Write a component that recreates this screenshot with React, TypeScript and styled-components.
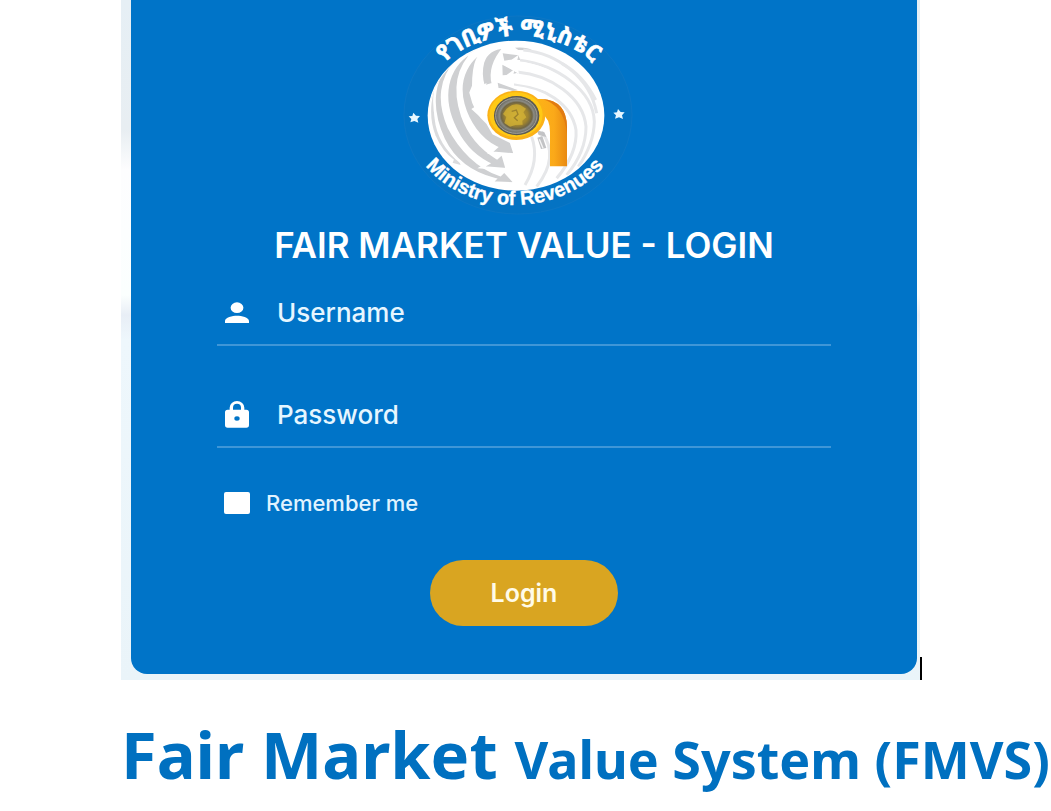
import React from 'react';
import styled, { createGlobalStyle } from 'styled-components';

const GlobalStyle = createGlobalStyle`
  *, *::before, *::after { box-sizing: border-box; }
  body { margin: 0; background: #fff; font-family: Inter, 'Liberation Sans', sans-serif; }
`;

const Page = styled.main`
  display: flex;
  flex-direction: column;
`;

const Stage = styled.div`
  display: flex;
  align-items: flex-end;
  margin: 0 129px 0 121px;
`;

const Backdrop = styled.div`
  flex: 1;
  padding: 0 3px 6px 10px;
  background: linear-gradient(#e6eff5 0, #e8eef2 130px, #fdfdfe 170px, #fbfffe 295px, #e8eef6 315px, #eef7fc 340px, #eaf4f9 100%);
`;

const Caret = styled.span`
  flex: none;
  width: 2px;
  height: 23px;
  background: #000;
`;

const Card = styled.form`
  display: flex;
  flex-direction: column;
  padding: 0 86px 48px;
  border-radius: 0 0 16px 16px;
  background: #0074c8;
  color: #fff;
`;

const Logo = styled.svg`
  display: block;
  align-self: center;
  width: 260px;
  height: 220px;
`;

const Title = styled.h1`
  margin: 4px 0 0;
  font-size: 35px;
  line-height: 42px;
  font-weight: 600;
  text-align: center;
  white-space: nowrap;
`;

const Field = styled.label`
  display: flex;
  align-items: center;
  gap: 24px;
  height: 64px;
  margin-top: 16px;
  padding-left: 4px;
  border-bottom: 2px solid #3f96d7;

  & + & { margin-top: 38px; }
`;

const FieldIcon = styled.svg`
  flex: none;
  width: 32px;
  height: 32px;
  fill: #fff;
`;

const Input = styled.input`
  flex: 1;
  min-width: 0;
  padding: 0;
  border: 0;
  outline: 0;
  background: transparent;
  color: #fff;
  font: 500 26px/32px Inter, 'Liberation Sans', sans-serif;

  &::placeholder { color: #e6f6ff; opacity: 1; }
`;

const Remember = styled.label`
  display: flex;
  align-items: center;
  gap: 16px;
  height: 24px;
  margin: 43px 0 0 7px;
  color: #e0f3ff;
  font-size: 22px;
  font-weight: 500;
`;

const Checkbox = styled.input`
  appearance: none;
  width: 26px;
  height: 22px;
  margin: 0;
  border-radius: 2px;
  background: #fff;

  &:checked { background: #daa520; }
`;

const LoginButton = styled.button`
  align-self: center;
  width: 188px;
  height: 66px;
  margin-top: 45px;
  border: 0;
  border-radius: 33px;
  background: #d9a521;
  color: #fffbe8;
  font: 600 25px/32px Inter, 'Liberation Sans', sans-serif;
`;

const Caption = styled.h2`
  margin: 30px 0 0 121px;
  color: #0070c0;
  font: 700 65px/88px 'Noto Sans', 'Liberation Sans', sans-serif;
  white-space: nowrap;
`;

const CaptionRest = styled.span`
  font-size: 52px;
`;

const Star = ({ x, y }: { x: number; y: number }) => (
  <path
    transform={`translate(${x} ${y})`}
    fill="#e8f7ff"
    d="M-3-15 5-6 17-5 9 4 12 15 0 10-12 14-9 4-17-4-6-5Z"
  />
);

const MinistryLogo = () => (
  <Logo viewBox="12 0 780 660" role="img" aria-label="Ministry of Revenues">
    <defs>
      <path id="arc-top" d="M86 350A300 243 0 0 1 686 350" />
      <path id="arc-bottom" d="M50 345A324 270 0 0 0 698 345" />
      <clipPath id="globe"><ellipse cx="378" cy="347" rx="262" ry="222" /></clipPath>
      <radialGradient id="coin">
        <stop offset="0" stopColor="#c9a936" />
        <stop offset=".5" stopColor="#9f842f" />
        <stop offset=".68" stopColor="#6f6545" />
        <stop offset=".76" stopColor="#8b8b83" />
        <stop offset="1" stopColor="#54524a" />
      </radialGradient>
      <linearGradient id="hook" x1="0" x2="1">
        <stop offset="0" stopColor="#ffb516" />
        <stop offset=".6" stopColor="#fba919" />
        <stop offset="1" stopColor="#e98a12" />
      </linearGradient>
    </defs>
    <ellipse cx="384" cy="345" rx="342" ry="297" fill="#0473c3" stroke="#1478c4" strokeWidth="2" />
    <ellipse cx="378" cy="347" rx="265" ry="225" fill="#fff" />
    <g clipPath="url(#globe)">
      <g fill="#cfd0d2" stroke="#fff" strokeWidth="8" transform="translate(105 108)">
        <path fill="#dadbdd" d="M52 108C10 160 5 240 28 300Q50 350 82 372L78 383 112 392 104 360 94 366C50 325 28 270 32 210Q36 155 52 108Z" />
        <path d="M98 68C20 110 10 210 56 310C90 380 150 415 210 430L200 440 272 443 238 405 226 417C160 395 105 340 72 275C38 195 45 130 98 68Z" />
        <path d="M152 42C70 80 45 170 84 262C108 320 145 360 190 382L170 394 246 400 232 352 216 366C165 335 130 290 112 240C85 160 95 95 152 42Z" />
        <path d="M206 30C155 45 145 85 145 150L137 170Q150 230 188 262L205 292 258 318 270 356 196 350 214 334C165 310 130 260 115 205C95 130 125 60 206 30Z" />
        <path d="M238 34Q188 36 174 78Q164 115 176 152L204 144Q190 90 238 34Z" />
        <path stroke="none" d="M233 52 280 58 286 72 258 71 238 74ZM232 86 278 110 255 116 233 118ZM218 140 278 162 246 170 222 164ZM270 35Q305 32 322 43L280 42Z" />
      </g>
      <g fill="none" stroke="#e6e7e9" strokeWidth="9">
        <path d="M400 150C500 160 600 230 620 340" />
        <path d="M390 181C500 195 610 270 613 365Q612 430 565 500" />
        <path d="M382 216C480 225 580 290 588 380Q588 455 530 525" />
        <path d="M372 252C460 260 545 310 558 390Q563 460 500 535" />
        <path d="M515 190Q580 225 617 300" />
        <path d="M455 395Q510 470 440 560" />
        <path d="M425 410Q450 480 405 555" />
      </g>
      <g fill="#fff">
        <path d="M342 195 386 164 381 184C440 188 500 215 545 255Q470 215 384 205L387 222Z" />
        <path d="M332 238 374 207 369 229C430 235 490 260 530 300Q450 260 370 250L375 267Z" />
        <path d="M240 274 290 249 284 264Q335 258 375 276L320 312 282 294 273 304Z" />
        <path d="M244 327 289 299 283 317 317 316 298 344 281 340 276 356Z" />
      </g>
      <path d="M442 413 457 408 469 444 453 447ZM440 391 463 397 469 411 446 405Z" fill="#c2c3c5" />
      <path d="M448 418 459 445" stroke="#f4f4f4" strokeWidth="4" />
    </g>
    <path d="M433 297H456Q530 301 531 382V499H480V397Q480 356 455 340Z" fill="url(#hook)" />
    <path d="M456 297Q530 301 531 382V402Q523 315 456 297Z" fill="#e17b13" />
    <ellipse cx="379" cy="346" rx="87" ry="74" fill="#fbb117" />
    <ellipse cx="378" cy="344" rx="80" ry="67" fill="#ffc915" />
    <ellipse cx="380" cy="347" rx="68" ry="59" fill="url(#coin)" />
    <ellipse cx="379" cy="347" rx="62" ry="53" fill="none" stroke="#a3a198" strokeWidth="3" />
    <path d="M350 326Q371 307 391 315L408 326 400 337 409 352 397 362 398 374 376 375 360 380 343 369 349 351 339 342Z" fill="#d4b336" opacity=".75" />
    <path d="M365 334 379 330 384 343 373 353 383 362" fill="none" stroke="#9d822c" strokeWidth="4" />
    <Star x={73} y={353} />
    <Star x={687} y={342} />
    <text fill="#fff" stroke="#fff" strokeWidth="2" fontFamily="'Noto Sans Ethiopic', 'Noto Sans', sans-serif" fontSize="69" fontWeight="700" textAnchor="middle">
      <textPath href="#arc-top" startOffset="50%">የገቢዎች ሚኒስቴር</textPath>
    </text>
    <text fill="#fff" stroke="#fff" strokeWidth="1" fontFamily="'Liberation Sans', sans-serif" fontSize="60" fontWeight="700" textAnchor="middle">
      <textPath href="#arc-bottom" startOffset="50%">Ministry of Revenues</textPath>
    </text>
  </Logo>
);

export default function App() {
  return (
    <>
      <GlobalStyle />
      <Page>
        <Stage>
          <Backdrop>
            <Card onSubmit={(e: React.FormEvent) => e.preventDefault()}>
              <MinistryLogo />
              <Title>FAIR MARKET VALUE - LOGIN</Title>
              <Field>
                <FieldIcon viewBox="0 0 24 24" preserveAspectRatio="none" aria-hidden="true">
                  <path d="M12 12a4.8 4 0 1 0 0-8 4.8 4 0 0 0 0 8Zm0 2c-3.4 0-9 1.4-9 4v1.500h18V18c0-2.600-5.600-4-9-4Z" />
                </FieldIcon>
                <Input type="text" name="username" placeholder="Username" aria-label="Username" />
              </Field>
              <Field>
                <FieldIcon viewBox="0 0 24 24" preserveAspectRatio="none" aria-hidden="true">
                  <path fillRule="evenodd" d="M19 8h-1.500V6.500a5.500 5 0 0 0-11 0V8H5a2 2 0 0 0-2 2v9.500a2 2 0 0 0 2 2h14a2 2 0 0 0 2-2V10a2 2 0 0 0-2-2ZM9 8V6.500a3 3 0 0 1 6 0V8H9Zm3 5a2 1.700 0 1 1 0 3.400 2 1.700 0 0 1 0-3.400Z" />
                </FieldIcon>
                <Input type="password" name="password" placeholder="Password" aria-label="Password" />
              </Field>
              <Remember>
                <Checkbox type="checkbox" name="remember" />
                Remember me
              </Remember>
              <LoginButton type="submit">Login</LoginButton>
            </Card>
          </Backdrop>
          <Caret />
        </Stage>
        <Caption>
          Fair Market <CaptionRest>Value System (FMVS)</CaptionRest>
        </Caption>
      </Page>
    </>
  );
}
